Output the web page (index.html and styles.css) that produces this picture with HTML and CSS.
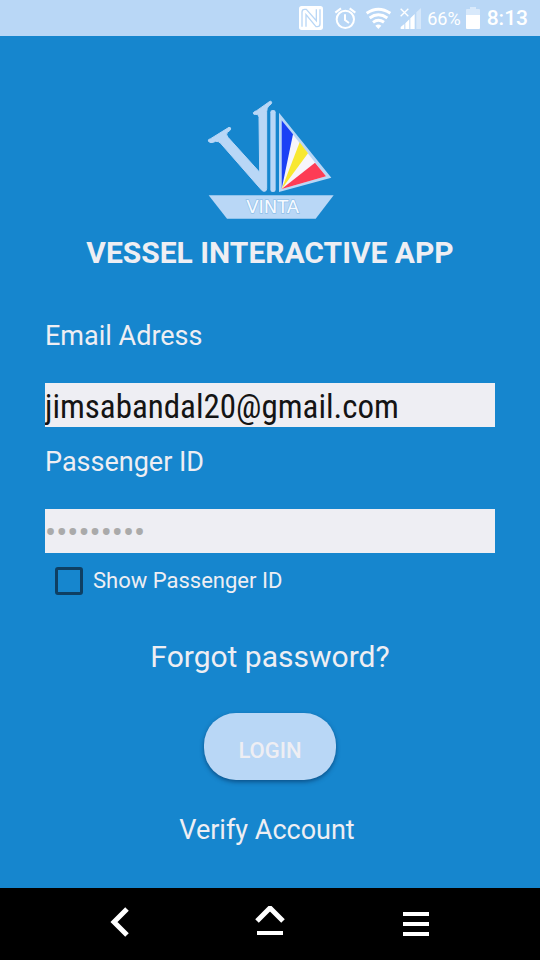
FILE: index.html
```html
<!DOCTYPE html>
<html lang="en">
<head>
<meta charset="utf-8">
<meta name="viewport" content="width=device-width, initial-scale=1">
<title>Vessel Interactive App</title>
<link rel="stylesheet" href="styles.css">
</head>
<body>
<header class="status">
  <svg class="status-icons" viewBox="0 0 405 120" aria-hidden="true">
    <rect x="27" y="18" width="72" height="72" rx="8" fill="#fff"/>
    <path d="M36 80V36q0-8 8-8h5l30 34V28M48 80V44l30 36h4q8 0 8-8V28" fill="none" stroke="#b9d7f6" stroke-width="4"/>
    <g fill="none" stroke="#fff" stroke-width="6">
      <circle cx="166" cy="58" r="26"/>
      <path d="M136 38l17-13M196 38l-17-13M165 43v17l12 9"/>
    </g>
    <g fill="none" stroke="#fff" stroke-width="9">
      <path d="M230 40q35-24 71 0M239 54q26-19 53 0M249 67q16-12 33 0"/>
      <path d="M265 87l-9-10q9-7 18 0z" fill="#fff" stroke="none"/>
    </g>
    <path d="M332 26l23 23M355 26l-23 23" stroke="#fff" stroke-width="4"/>
    <path d="M332 87v-6l11-9v15zM346 87V70l12-12v29zM361 87V55l13-13v45z" fill="#fff"/>
    <path d="M379 87V37l14-13v63z" fill="#d5e7fa"/>
  </svg>
  <span class="percent">66%</span>
  <svg class="battery" viewBox="0 0 14 22" aria-hidden="true">
    <path d="M0 3q0-1 1-1h3V0h6v2h3q1 0 1 1v6H0z" fill="#d8e9fb"/>
    <path d="M0 8h14v13q0 1-1 1H1q-1 0-1-1z" fill="#fff"/>
  </svg>
  <time class="clock">8:13</time>
</header>

<main class="page">
  <svg class="logo" viewBox="0 0 480 450" role="img" aria-label="Vinta sailboat">
    <path d="M55 183Q53 178 62 176L117 142Q123 142 122 147Q121 152 112 157Q107 164 114 172L209 277L207 112Q207 102 198 103Q189 105 190 98Q191 95 200 92L234 68Q243 60 245 67Q246 72 236 78Q230 84 230 95V326Q230 334 222 334Q217 334 212 327L92 190Q86 183 77 184Q60 192 55 183Z" fill="#b9d7f6" stroke="#b9d7f6" stroke-width="3"/>
    <rect x="241" y="90" width="16" height="246" rx="7" fill="#b9d7f6"/>
    <path d="M267 98L424 293L267 336Z" fill="#b9d7f6"/>
    <path d="M275 121L408 289L275 327Z" fill="#f7f5fb"/>
    <path d="M275 121L309 163L275 327Z" fill="#1b40f5"/>
    <path d="M329 187L354 220L275 327Z" fill="#f8e831"/>
    <path d="M375 248L408 289L275 327Z" fill="#fd3c55"/>
    <path d="M56 346H431L377 416H111Z" fill="#b9d7f6"/>
    <text class="logo-name" x="248" y="400" text-anchor="middle">VINTA</text>
  </svg>
  <h1 class="title">VESSEL INTERACTIVE APP</h1>

  <form class="form">
    <label class="label" for="email">Email Adress</label>
    <input class="field" id="email" type="text" value="jimsabandal20@gmail.com">
    <label class="label" for="passenger">Passenger ID</label>
    <input class="field" id="passenger" type="password" placeholder="•••••••••">
    <label class="show"><input class="check" type="checkbox">Show Passenger ID</label>
    <a class="forgot" href="#">Forgot password?</a>
    <button class="login" type="button"><span class="login-text">LOGIN</span></button>
    <a class="verify" href="#">Verify Account</a>
  </form>
</main>

<nav class="nav">
  <button class="nav-button" type="button" aria-label="Back">
    <svg viewBox="0 0 32 32"><path d="M23 3L10 16l13 13" fill="none" stroke="#fff" stroke-width="5"/></svg>
  </button>
  <button class="nav-button" type="button" aria-label="Home">
    <svg viewBox="0 0 32 32"><path d="M4 15L17 2l13 13" fill="none" stroke="#fff" stroke-width="5"/><path d="M4 27h26" stroke="#fff" stroke-width="4"/></svg>
  </button>
  <button class="nav-button" type="button" aria-label="Menu">
    <svg viewBox="0 0 32 32"><path d="M1 8h26M1 18h26M1 28h26" fill="none" stroke="#fff" stroke-width="4"/></svg>
  </button>
</nav>
</body>
</html>
```
FILE: styles.css
```css
* { box-sizing: border-box; }

body {
  margin: 0;
  min-height: 100vh;
  display: flex;
  flex-direction: column;
  background: #1686ce;
  color: #eeeef3;
  font-family: Roboto, "Liberation Sans", sans-serif;
}

.status {
  display: flex;
  align-items: center;
  justify-content: flex-end;
  height: 36px;
  padding-right: 12px;
  background: #b9d7f6;
  color: #fff;
}

.status-icons { width: 135px; height: 40px; margin-top: 4px; }
.percent { margin-left: 2px; font-size: 18px; }
.battery { width: 14px; height: 22px; margin: 0 7px 0 5px; }
.clock { font-size: 21px; font-weight: 500; }

.page {
  flex: 1;
  display: flex;
  flex-direction: column;
  align-items: center;
  padding: 44px 45px 36px;
}

.logo { width: 160px; height: 150px; }

.logo-name {
  font-family: "DejaVu Sans", sans-serif;
  font-size: 54px;
  fill: #f6faff;
  stroke: #8fc0ea;
  stroke-width: 4px;
  paint-order: stroke;
}

.title {
  margin: 3px 0 0;
  font-size: 30px;
  line-height: 40px;
  font-weight: 700;
}

.form {
  align-self: stretch;
  display: flex;
  flex-direction: column;
  margin-top: 43px;
}

.label {
  height: 67px;
  font-size: 27px;
  line-height: 40px;
}

.field {
  width: 100%;
  height: 44px;
  margin-bottom: 15px;
  padding: 2px 0 0;
  border: 0;
  border-radius: 0;
  background: #eeeef3;
  color: #141414;
  font-family: "Roboto Condensed", Roboto, sans-serif;
  font-size: 33px;
}

.field::placeholder { color: #aaa; opacity: 1; }

.show {
  display: flex;
  align-items: center;
  gap: 10px;
  align-self: flex-start;
  margin-top: -1px;
  padding-left: 10px;
  font-size: 22px;
  line-height: 28px;
}

.check {
  appearance: none;
  width: 28px;
  height: 28px;
  margin: 0;
  border: 3px solid #0e3f63;
  border-radius: 3px;
}

a { color: inherit; text-decoration: none; }

.forgot {
  align-self: center;
  margin-top: 42px;
  font-size: 30px;
  line-height: 40px;
}

.login {
  align-self: center;
  display: flex;
  justify-content: center;
  align-items: center;
  width: 132px;
  height: 67px;
  margin-top: 36px;
  padding: 7px 0 0;
  border: 0;
  border-radius: 32px;
  background: #b9d7f6;
  box-shadow: 0 2px 4px rgba(0, 30, 70, 0.5);
  color: #eeeef3;
  font: 500 22px Roboto, sans-serif;
}

.login-text {
  height: 16px;
  line-height: 18px;
  overflow: hidden;
}

.verify {
  align-self: center;
  margin: 30px 6px 0 0;
  font-size: 27px;
  line-height: 40px;
}

.nav {
  display: flex;
  justify-content: space-around;
  align-items: center;
  height: 72px;
  padding: 0 48px 4px 46px;
  background: #000;
}

.nav-button {
  display: flex;
  padding: 8px;
  border: 0;
  background: none;
}

.nav-button svg { width: 32px; height: 32px; }
```
